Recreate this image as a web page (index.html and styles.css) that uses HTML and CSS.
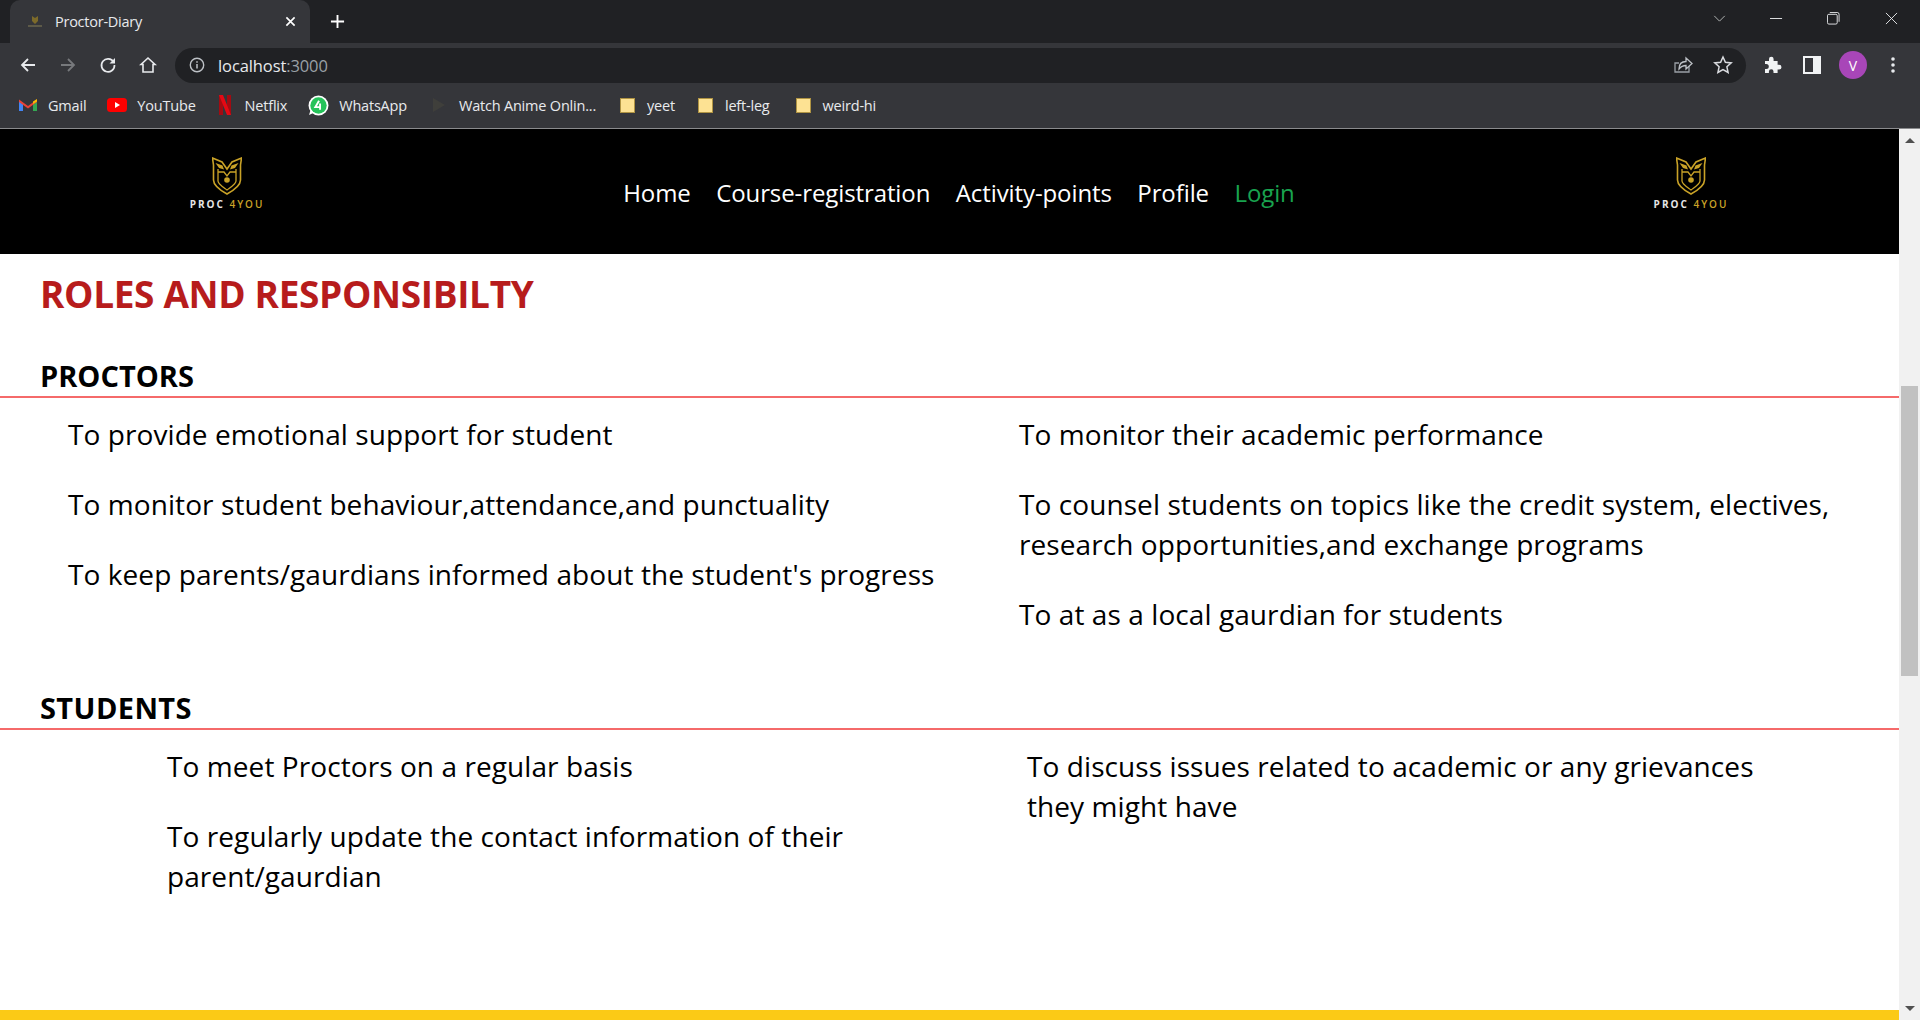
FILE: index.html
```html
<!DOCTYPE html>
<html lang="en">
<head>
<meta charset="utf-8">
<title>Proctor-Diary</title>
<link rel="stylesheet" href="styles.css">
</head>
<body>
<div class="browser">
  <div class="tabstrip">
    <div class="tab">
      <svg class="favicon" viewBox="0 0 16 16"><path d="M5 2l3 2 3-2v5l-3 3-3-3z" fill="#7c6a2a"/><path d="M1 11h14v2H1z" fill="#5d5a48"/></svg>
      <span class="tab-title">Proctor-Diary</span>
      <svg class="tab-close" viewBox="0 0 12 12"><path d="M1.500 1.500l9 9M10.500 1.500l-9 9" stroke="#fff" stroke-width="1.800"/></svg>
    </div>
    <svg class="newtab" viewBox="0 0 16 16"><path d="M8 1v14M1 8h14" stroke="#fff" stroke-width="2"/></svg>
    <div class="win-controls">
      <svg class="win-chev" viewBox="0 0 14 8"><path d="M1 1l6 6 6-6" fill="none" stroke="#c4c7c5" stroke-width="1"/></svg>
      <svg class="win-btn win-min" viewBox="0 0 14 14"><path d="M0 7h13" stroke="#e8eaed" stroke-width="1"/></svg>
      <svg class="win-btn win-max" viewBox="0 0 14 14"><rect x=".5" y="2.500" width="10.500" height="10.500" rx="1.500" fill="none" stroke="#e8eaed"/><path d="M3 .5h8a2 2 0 0 1 2 2v8" fill="none" stroke="#e8eaed"/></svg>
      <svg class="win-btn win-close" viewBox="0 0 14 14"><path d="M1 1l12 12M13 1L1 13" stroke="#e8eaed" stroke-width="1"/></svg>
    </div>
  </div>
  <div class="toolbar">
    <svg class="tb-icon nav-first" viewBox="0 0 18 18"><path d="M16 9H3M9 3L3 9l6 6" fill="none" stroke="#e8eaed" stroke-width="1.800"/></svg>
    <svg class="tb-icon" viewBox="0 0 18 18"><path d="M2 9h13M9 3l6 6-6 6" fill="none" stroke="#77797c" stroke-width="1.800"/></svg>
    <svg class="tb-icon" viewBox="0 0 18 18"><path d="M14.600 6A6.500 6.500 0 1 0 15.500 9" fill="none" stroke="#e8eaed" stroke-width="1.700"/><path d="M16 2v5.500h-5.500z" fill="#e8eaed"/></svg>
    <svg class="tb-icon" viewBox="0 0 18 18"><path d="M9 2L2 8.500h2V16h10V8.500h2z" fill="none" stroke="#e8eaed" stroke-width="1.600"/></svg>
    <div class="omnibox">
      <svg class="info" viewBox="0 0 16 16"><circle cx="8" cy="8" r="6.700" fill="none" stroke="#bdc1c6" stroke-width="1.400"/><path d="M8 7v4.500M8 4.300v1.500" stroke="#bdc1c6" stroke-width="1.500"/></svg>
      <span class="url">localhost<span class="url-port">:3000</span></span>
      <svg class="omni-share" viewBox="0 0 20 20"><path d="M16 11v6H2V8h4" fill="none" stroke="#9aa0a6" stroke-width="1.300"/><path d="M6 14c0-5 3-7.500 7-7.500V3l6 5.500-6 5.500v-3.500c-3 0-5 1-7 3.500z" fill="#202124" stroke="#bdc1c6" stroke-width="1.300"/></svg>
      <svg class="omni-star" viewBox="0 0 20 20"><path d="M10 2l2.400 5.300 5.800.6-4.300 3.900 1.200 5.700L10 14.600l-5.100 2.900 1.200-5.700L1.800 7.900l5.800-.6z" fill="none" stroke="#dadce0" stroke-width="1.500"/></svg>
    </div>
    <svg class="tb-puzzle" viewBox="0 0 20 20"><path d="M2 7h4V5a2.300 2.300 0 0 1 4.600 0v2h4v3.800h1.500a2.400 2.400 0 0 1 0 4.800h-1.500V19H10.500v-1.500a2.300 2.300 0 0 0-4.600 0V19H2v-4h1.300a2.500 2.500 0 0 0 0-5H2z" fill="#f1f3f4" transform="translate(0 -1)"/></svg>
    <svg class="tb-panel" viewBox="0 0 18 18"><path d="M0 0h18v18H0z" fill="#f1f3f4"/><path d="M2 2h8v14H2z" fill="#35363a"/></svg>
    <div class="avatar">V</div>
    <svg class="tb-menu" viewBox="0 0 4 16"><circle cx="2" cy="2" r="1.800" fill="#e8eaed"/><circle cx="2" cy="8" r="1.800" fill="#e8eaed"/><circle cx="2" cy="14" r="1.800" fill="#e8eaed"/></svg>
  </div>
  <div class="bookmarks">
    <span class="bm bm-gmail">
      <svg class="bm-ico" viewBox="0 0 18 14"><path d="M0 3v10h4V6z" fill="#4285f4"/><path d="M14 6v7h4V3z" fill="#34a853"/><path d="M0 1.500L9 8l9-6.500V4L9 10.500 0 4z" fill="#ea4335"/><path d="M14 3.500V6l4-2.500V1z" fill="#fbbc04"/></svg>Gmail</span>
    <span class="bm bm-yt">
      <svg class="bm-ico" viewBox="0 0 20 14"><rect width="20" height="14" rx="3.500" fill="#f00"/><path d="M8 4l5 3-5 3z" fill="#fff"/></svg>YouTube</span>
    <span class="bm bm-nf">
      <svg class="bm-ico bm-ico-nf" viewBox="0 0 12 20"><path d="M0 0h4v20H0zM8 0h4v20H8z" fill="#a30b12"/><path d="M0 0h4l8 20H8z" fill="#e50914"/></svg>Netflix</span>
    <span class="bm bm-wa">
      <svg class="bm-ico bm-ico-wa" viewBox="0 0 20 20"><circle cx="10" cy="10" r="9.500" fill="#fff"/><circle cx="10" cy="10" r="7.800" fill="#25c35a"/><path d="M1 19l1.500-5 3 3z" fill="#fff"/><path d="M10.500 5.500L7 11.500h5M11.500 8v6" fill="none" stroke="#fff" stroke-width="1.800"/></svg>WhatsApp</span>
    <span class="bm bm-anime">
      <svg class="bm-ico-play" viewBox="0 0 14 14"><path d="M1 0l12 7-12 7z" fill="#3f3f3b"/></svg>Watch Anime Onlin...</span>
    <span class="bm bm-f1"><i class="folder"></i>yeet</span>
    <span class="bm bm-f2"><i class="folder"></i>left-leg</span>
    <span class="bm"><i class="folder"></i>weird-hi</span>
  </div>
</div>
<div class="viewport">
  <div class="page">
    <nav class="navbar">
      <div class="logo">
        <svg class="owl" viewBox="0 0 30 38"><path d="M.5 1L10 5l5 7 5-7 9.500-4-1 7v15c0 6-8 11-13.500 14C9.500 34 1.500 29 1.500 23V8z" fill="none" stroke="#c9a227" stroke-width="1.600"/><path d="M6 12v12c0 3 5 6 9 9 4-3 9-6 9-9V12M6 15h6l3 4 3-4h6" fill="none" stroke="#c9a227" stroke-width="1.300"/><path d="M3.500 6l7 2.500 1.500 4-5-1.500zM26.500 6l-7 2.500-1.500 4 5-1.500z" fill="#c9a227"/><circle cx="15" cy="23" r="2.800" fill="#c9a227"/></svg>
        <div class="logo-text">PROC <span class="logo-gold">4YOU</span></div>
      </div>
      <ul class="nav-links">
        <li>Home</li>
        <li>Course-registration</li>
        <li>Activity-points</li>
        <li>Profile</li>
        <li class="nav-login">Login</li>
      </ul>
      <div class="logo">
        <svg class="owl" viewBox="0 0 30 38"><path d="M.5 1L10 5l5 7 5-7 9.500-4-1 7v15c0 6-8 11-13.500 14C9.500 34 1.500 29 1.500 23V8z" fill="none" stroke="#c9a227" stroke-width="1.600"/><path d="M6 12v12c0 3 5 6 9 9 4-3 9-6 9-9V12M6 15h6l3 4 3-4h6" fill="none" stroke="#c9a227" stroke-width="1.300"/><path d="M3.500 6l7 2.500 1.500 4-5-1.500zM26.500 6l-7 2.500-1.500 4 5-1.500z" fill="#c9a227"/><circle cx="15" cy="23" r="2.800" fill="#c9a227"/></svg>
        <div class="logo-text">PROC <span class="logo-gold">4YOU</span></div>
      </div>
    </nav>
    <main class="content">
      <h1 class="title">ROLES AND RESPONSIBILTY</h1>
      <h2 class="section-head head-proctors">PROCTORS</h2>
      <hr class="rule">
      <div class="cols cols-proctors">
        <ul class="items">
          <li>To provide emotional support for student</li>
          <li>To monitor student behaviour,attendance,and punctuality</li>
          <li>To keep parents/gaurdians informed about the student's progress</li>
        </ul>
        <ul class="items">
          <li>To monitor their academic performance</li>
          <li>To counsel students on topics like the credit system, electives, research opportunities,and exchange programs</li>
          <li>To at as a local gaurdian for students</li>
        </ul>
      </div>
      <h2 class="section-head head-students">STUDENTS</h2>
      <hr class="rule">
      <div class="cols cols-students">
        <ul class="items">
          <li>To meet Proctors on a regular basis</li>
          <li>To regularly update the contact information of their parent/gaurdian</li>
        </ul>
        <ul class="items">
          <li>To discuss issues related to academic or any grievances they might have</li>
        </ul>
      </div>
    </main>
    <footer class="footer"></footer>
  </div>
  <div class="scrollbar">
    <i class="arrow-up"></i>
    <div class="thumb"></div>
    <i class="arrow-down"></i>
  </div>
</div>
</body>
</html>
```
FILE: styles.css
```css
* { box-sizing: border-box; }
html, body { margin: 0; height: 100%; overflow: hidden; }
body { display: flex; flex-direction: column; height: 1020px; font-family: "Open Sans", "Noto Sans", sans-serif; background: #fff; }
ul { list-style: none; margin: 0; padding: 0; }
svg { display: block; flex: none; }

.browser { flex: none; height: 129px; background: #35363a; border-bottom: 1px solid #8a8b8d; color: #e8eaed; }
.tabstrip { height: 43px; background: #202124; display: flex; align-items: flex-start; padding-left: 10px; }
.tab { width: 300px; height: 43px; background: #35363a; border-radius: 10px 10px 0 0; display: flex; align-items: center; padding: 0 14px 0 17px; }
.favicon { width: 16px; height: 16px; }
.tab-title { font-size: 14.500px; letter-spacing: -0.250px; margin-left: 12px; color: #e8eaed; }
.tab-close { width: 11px; height: 11px; margin-left: auto; }
.newtab { width: 15px; height: 15px; margin: 14px 0 0 20px; }
.win-controls { margin-left: auto; display: flex; align-items: center; height: 36px; padding-right: 22px; }
.win-chev { width: 13px; height: 7px; margin-right: 44px; }
.win-btn { width: 13px; height: 13px; }
.win-min { margin-right: 44px; }
.win-max { margin-right: 45px; }

.toolbar { height: 42px; display: flex; align-items: center; padding-left: 19px; padding-top: 2px; }
.tb-icon { width: 18px; height: 18px; margin-right: 22px; }
.omnibox { width: 1571px; height: 35px; margin-left: -4px; background: #202124; border-radius: 18px; display: flex; align-items: center; padding: 0 13px 0 14px; }
.info { width: 16px; height: 16px; }
.url { font-size: 16.500px; letter-spacing: -0.100px; margin-left: 13px; color: #e8eaed; }
.url-port { color: #9aa0a6; }
.omni-share { width: 20px; height: 20px; margin-left: auto; margin-right: 20px; }
.omni-star { width: 20px; height: 20px; }
.tb-puzzle { width: 20px; height: 20px; margin-left: 17px; }
.tb-panel { width: 18px; height: 18px; margin-left: 20px; }
.avatar { width: 28px; height: 28px; border-radius: 50%; background: #a846b8; color: #fff; font-size: 14px; display: flex; align-items: center; justify-content: center; margin-left: 18px; }
.tb-menu { width: 4px; height: 16px; margin-left: 24px; }

.bookmarks { height: 42px; padding-bottom: 2px; display: flex; align-items: center; padding-left: 19px; font-size: 14.500px; letter-spacing: -0.200px; color: #e8eaed; }
.bm { display: flex; align-items: center; white-space: nowrap; margin-right: 22px; }
.bm-gmail { margin-right: 21px; }
.bm-ico { width: 18px; height: 14px; margin-right: 11px; }
.bm-yt .bm-ico { width: 20px; margin-right: 10px; }
.bm-nf { margin-left: 1px; margin-right: 21px; }
.bm-ico-nf { width: 12px; height: 20px; margin-right: 14px; }
.bm-ico-wa { width: 21px; height: 21px; margin-right: 10px; }
.bm-wa { margin-right: 25px; }
.bm-ico-play { width: 14px; height: 14px; margin-right: 13px; }
.bm-anime { margin-right: 24px; }
.bm-f1 { margin-right: 23px; }
.bm-f2 { margin-right: 26px; }
.folder { width: 15px; height: 15px; margin-right: 12px; background: #fde293; border: 1px solid #b09443; display: block; }

.viewport { flex: 1; display: flex; min-height: 0; }
.page { flex: 1; min-width: 0; display: flex; flex-direction: column; }
.navbar { flex: none; height: 125px; background: #000; display: flex; justify-content: space-between; align-items: center; padding: 0 171px 0 190px; }
.logo { display: flex; flex-direction: column; align-items: center; margin-bottom: 17px; width: 74px; }
.owl { width: 30px; height: 38px; }
.logo-text { font-size: 10px; font-weight: 700; letter-spacing: 2px; line-height: 12px; color: #e6e6e6; margin-top: 3px; white-space: pre; }
.logo-gold { color: #c9a227; font-weight: 600; }
.nav-links { display: flex; gap: 25.500px; font-size: 24px; letter-spacing: -0.100px; color: #fff; margin-top: 1px; }
.nav-login { color: #19a34f; }

.content { flex: 1; min-height: 0; color: #000; }
.title { margin: 16px 0 0 40px; font-size: 37px; font-weight: 700; line-height: 48px; letter-spacing: -0.350px; color: #b71c1c; }
.section-head { margin: 0 0 2px 40px; font-size: 29px; line-height: 36px; font-weight: 700; letter-spacing: 0; }
.head-proctors { margin-top: 40px; }
.head-students { letter-spacing: 0.400px; }
.rule { margin: 0; border: 0; height: 2px; background: #f56a6a; }
.cols { display: grid; }
.cols-proctors { grid-template-columns: 951px 1fr; padding: 16px 0 0 68px; height: 292px; }
.cols-students { grid-template-columns: 860px 1fr; padding: 16px 0 0 167px; }
.items { font-size: 28px; line-height: 40px; letter-spacing: 0.080px; display: flex; flex-direction: column; gap: 30px; }
.cols-proctors .items:last-child { padding-right: 60px; }
.cols-students .items:first-child { padding-right: 120px; }
.cols-students .items:last-child { padding-right: 130px; }
.footer { flex: none; height: 10px; background: #fbca16; }

.scrollbar { flex: none; width: 21px; background: #f1f1f1; display: flex; flex-direction: column; align-items: center; }
.arrow-up { width: 0; height: 0; border: 5px solid transparent; border-top: 0; border-bottom: 5px solid #505050; margin-top: 9px; }
.thumb { width: 17px; height: 290px; background: #c1c1c1; margin-top: 243px; }
.arrow-down { width: 0; height: 0; border: 5px solid transparent; border-bottom: 0; border-top: 5px solid #505050; margin-top: auto; margin-bottom: 9px; }
```
